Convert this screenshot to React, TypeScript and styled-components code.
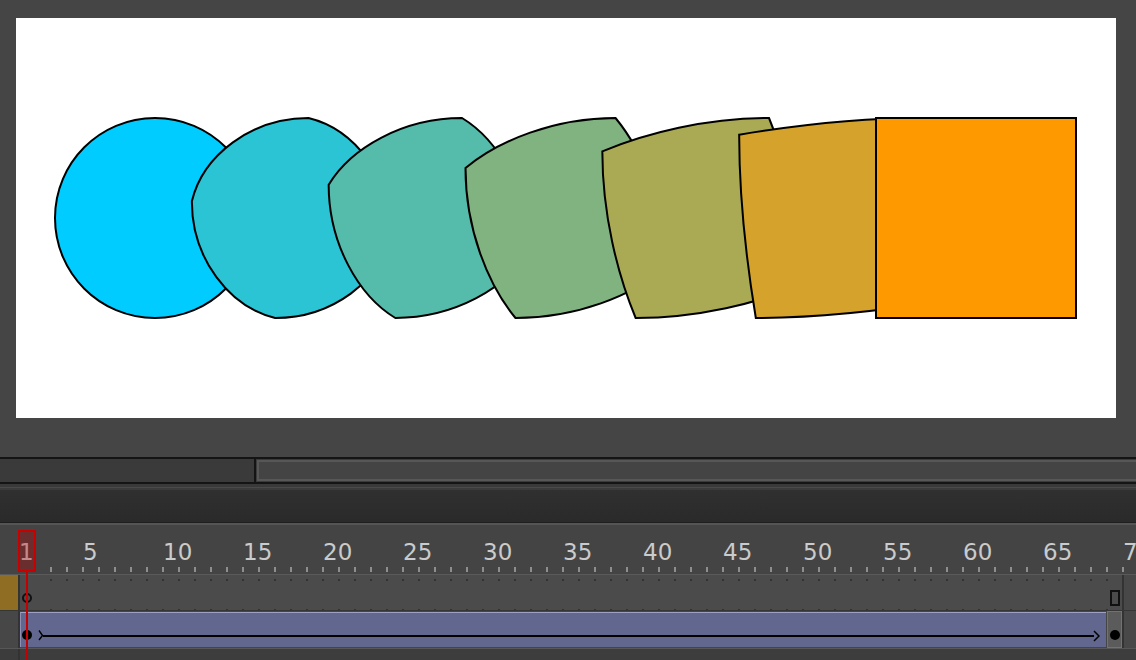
import styled, { createGlobalStyle } from 'styled-components';

type Pt = [number, number];

const K = 55.23;
// circle on the stage: centre 139,200, r 100 — quarter arcs left → top → right → bottom
const CIRCLE: Pt[][] = [
  [[39, 200], [39, 200 - K], [139 - K, 100], [139, 100]],
  [[139, 100], [139 + K, 100], [239, 200 - K], [239, 200]],
  [[239, 200], [239, 200 + K], [139 + K, 300], [139, 300]],
  [[139, 300], [139 - K, 300], [39, 200 + K], [39, 200]],
];
// square 860..1060 x 100..300, corners TL → TR → BR → BL
const SQUARE: Pt[][] = [
  [[860, 100], [926.67, 100], [993.33, 100], [1060, 100]],
  [[1060, 100], [1060, 166.67], [1060, 233.33], [1060, 300]],
  [[1060, 300], [993.33, 300], [926.67, 300], [860, 300]],
  [[860, 300], [860, 233.33], [860, 166.67], [860, 100]],
];

const mix = (a: number, b: number, t: number) => a + (b - a) * t;
const fmt = (p: Pt) => `${p[0].toFixed(2)} ${p[1].toFixed(2)}`;

const morphPath = (t: number) => {
  const segs = CIRCLE.map((seg, i) =>
    seg.map((p, j) => [mix(p[0], SQUARE[i][j][0], t), mix(p[1], SQUARE[i][j][1], t)] as Pt)
  );
  let d = `M${fmt(segs[0][0])}`;
  segs.forEach((s) => {
    d += ` C${fmt(s[1])} ${fmt(s[2])} ${fmt(s[3])}`;
  });
  return d + ' Z';
};

const shapeColor = (t: number) =>
  `rgb(${Math.round(mix(0, 255, t))}, ${Math.round(mix(204, 153, t))}, ${Math.round(mix(255, 0, t))})`;

const STEPS = [0, 1, 2, 3, 4, 5, 6].map((i) => i / 6);
const FRAMES = Array.from({ length: 70 }, (_, i) => i + 1);

const GlobalStyle = createGlobalStyle`
  html, body {
    margin: 0;
    padding: 0;
    background: #454545;
  }
  body {
    font-family: "DejaVu Sans", "Liberation Sans", sans-serif;
    overflow: hidden;
  }
`;

const Screen = styled.div`
  width: 1136px;
  height: 660px;
  display: flex;
  flex-direction: column;
  overflow: hidden;
`;

const Workspace = styled.div`
  height: 457px;
  flex: none;
  box-sizing: border-box;
  padding: 18px 0 0 16px;
  background: #454545;
`;

const Stage = styled.div`
  width: 1100px;
  height: 400px;
  background: #fff;

  svg {
    display: block;
  }
`;

const ScrollRow = styled.div`
  display: flex;
  flex: none;
  height: 23px;
  border-top: 2px solid #141414;
  border-bottom: 2px solid #141414;
  background: #3b3b3b;
`;

const ScrollLeft = styled.div`
  width: 254px;
  background: #3a3a3a;
  border-right: 2px solid #141414;
`;

const ScrollTrack = styled.div`
  flex: 1;
  margin: 1px 0 1px 1px;
  border: 2px solid #575757;
  border-right: none;
  background: #444;
`;

const Strip = styled.div`
  height: 6px;
  flex: none;
  background: linear-gradient(#393939 0 3px, #4a4a4a 3px 4px, #3b3b3b 4px);
`;

const HeaderPanel = styled.div`
  height: 32px;
  flex: none;
  background: linear-gradient(#303030, #2a2a2a);
  border-bottom: 1px solid #1f1f1f;
`;

const Timeline = styled.div`
  position: relative;
  flex: 1;
  display: flex;
  flex-direction: column;
`;

const Ruler = styled.div`
  display: flex;
  height: 49px;
  flex: none;
  background: #444;
  border-top: 2px solid #555;
  border-bottom: 1px solid #5a5a5a;
  overflow: hidden;
`;

const RulerGutter = styled.div`
  width: 19px;
  flex: none;
`;

const RulerCell = styled.div`
  position: relative;
  width: 16px;
  flex: none;

  &::before {
    content: '';
    position: absolute;
    left: -1px;
    bottom: 2px;
    width: 2px;
    height: 5px;
    background: #8e8e8e;
  }
`;

const FrameNumber = styled.span`
  display: block;
  padding-top: 16px;
  font-size: 23px;
  line-height: 23px;
  color: #c9cbcd;
  white-space: nowrap;
`;

const LayerRow = styled.div<{ $height: number; $line: string }>`
  display: flex;
  flex: none;
  height: ${({ $height }) => $height}px;
  border-bottom: 1px solid ${({ $line }) => $line};
`;

const Swatch = styled.div<{ $color: string }>`
  width: 18px;
  flex: none;
  background: ${({ $color }) => $color};
  border-right: 2px solid #333;
`;

const Frames = styled.div<{ $grid?: boolean }>`
  position: relative;
  width: 1102px;
  flex: none;
  display: flex;
  box-sizing: border-box;
  background: #4b4b4b;

  ${({ $grid }) =>
    $grid &&
    `
    align-items: center;
    justify-content: space-between;
    padding: 10px 2px 0 2px;

    &::before {
      content: '';
      position: absolute;
      left: 30px;
      right: 0;
      top: 4px;
      bottom: 0;
      background:
        linear-gradient(to right, #333 0 2px, transparent 2px) 0 0 / 16px 2px repeat-x,
        linear-gradient(to right, #333 0 2px, transparent 2px) 0 30px / 16px 2px repeat-x;
    }
  `}
`;

const TailCell = styled.div`
  flex: 1;
  background: #484848;
  border-left: 2px solid #333;
`;

const EmptyKey = styled.div`
  position: relative;
  width: 10px;
  height: 10px;
  box-sizing: border-box;
  border: 2px solid #111;
  border-radius: 50%;
`;

const EndFrame = styled.div`
  position: relative;
  width: 10px;
  height: 16px;
  box-sizing: border-box;
  border: 2px solid #111;
`;

const TweenFrames = styled.div`
  width: 1102px;
  flex: none;
  display: flex;
  background: #454545;
`;

const TweenSpan = styled.div`
  flex: 1;
  display: flex;
  align-items: center;
  box-sizing: border-box;
  height: 35px;
  margin: 1px 1px 0 0;
  padding: 10px 6px 0 1px;
  background: #62678f;
  border-top: 1px solid #9ea1c4;
  border-left: 1px solid #8d90b4;
`;

const KeyDot = styled.div`
  width: 10px;
  height: 10px;
  flex: none;
  border-radius: 50%;
  background: #000;
`;

const ArrowLine = styled.div`
  flex: 1;
  height: 2px;
  margin: 1px -2px 0 -1px;
  background: #000;
`;

const KeyCell = styled.div`
  width: 15px;
  flex: none;
  display: flex;
  justify-content: center;
  align-items: center;
  box-sizing: border-box;
  padding-top: 11px;
  background: #5b5b5b;
  border: 1px solid #727272;
`;

const Footer = styled.div`
  flex: 1;
  display: flex;
  background: #3d3d3d;
`;

const Playhead = styled.div`
  position: absolute;
  left: 18px;
  top: 7px;
  width: 18px;
  height: 42px;
  box-sizing: border-box;
  border: 2px solid #c80000;
  background: rgba(190, 0, 0, 0.32);
  z-index: 2;
`;

const PlayheadLine = styled.div`
  position: absolute;
  left: 26px;
  top: 49px;
  bottom: 0;
  width: 2px;
  background: #c40000;
  z-index: 2;
`;

const App = () => (
  <Screen>
    <GlobalStyle />
    <Workspace>
      <Stage>
        <svg width="1100" height="400" viewBox="0 0 1100 400">
          {STEPS.map((t) => (
            <path key={t} d={morphPath(t)} fill={shapeColor(t)} stroke="#000" strokeWidth={2} />
          ))}
        </svg>
      </Stage>
    </Workspace>

    <ScrollRow>
      <ScrollLeft />
      <ScrollTrack />
    </ScrollRow>
    <Strip />
    <HeaderPanel />

    <Timeline>
      <Ruler>
        <RulerGutter />
        {FRAMES.map((n) => (
          <RulerCell key={n}>
            {(n === 1 || n % 5 === 0) && <FrameNumber>{n}</FrameNumber>}
          </RulerCell>
        ))}
      </Ruler>

      <LayerRow $height={35} $line="#363636">
        <Swatch $color="#8f6d22" />
        <Frames $grid>
          <EmptyKey />
          <EndFrame />
        </Frames>
        <TailCell />
      </LayerRow>

      <LayerRow $height={37} $line="#575757">
        <Swatch $color="#474747" />
        <TweenFrames>
          <TweenSpan>
            <KeyDot />
            <svg width="6" height="12" viewBox="0 0 6 12" style={{ marginLeft: 6, flex: 'none' }}>
              <path d="M1 1.5 L4.5 6.5 L1 11" fill="none" stroke="#000" strokeWidth={1.4} />
            </svg>
            <ArrowLine />
            <svg width="8" height="12" viewBox="0 0 8 12" style={{ flex: 'none', marginTop: 1 }}>
              <path d="M2 1 L7 6 L2 11" fill="none" stroke="#000" strokeWidth={1.5} />
            </svg>
          </TweenSpan>
          <KeyCell>
            <KeyDot />
          </KeyCell>
        </TweenFrames>
        <TailCell />
      </LayerRow>

      <Footer>
        <Swatch $color="#3c3c3c" />
      </Footer>

      <Playhead />
      <PlayheadLine />
    </Timeline>
  </Screen>
);

export default App;
